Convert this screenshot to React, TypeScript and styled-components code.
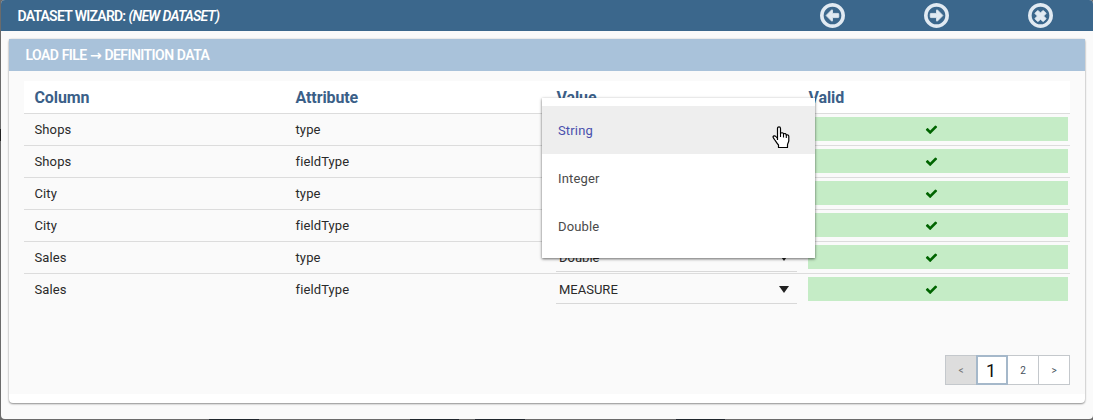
import React from 'react';
import styled, { createGlobalStyle, css } from 'styled-components';

const GlobalStyle = createGlobalStyle`
  *, *::before, *::after { box-sizing: border-box; }
  html, body { margin: 0; height: 100%; overflow: hidden; }
  body {
    background:
      linear-gradient(#222, #222) 0 129px / 1px 12px no-repeat,
      linear-gradient(90deg, transparent 209px, #20262c 209px 259px, transparent 259px 410px,
        #20262c 410px 459px, transparent 459px 475px, #20262c 475px 525px, transparent 525px 676px,
        #20262c 676px 725px, transparent 725px) 0 419px / 100% 1px no-repeat,
      #6b6b6b;
    font-family: Roboto, "Liberation Sans", sans-serif;
    font-size: 13px;
    color: #2a2a2a;
  }
`;

const Dialog = styled.main`
  position: relative;
  display: flex;
  flex-direction: column;
  height: 419px;
  margin-left: 1px;
  background: #fafafa;
  border-radius: 4px;
  overflow: hidden;
`;

const Toolbar = styled.header`
  display: flex;
  align-items: center;
  flex: none;
  height: 31px;
  padding: 0 40px 0 16.5px;
  background: #3b678c;
  color: #fff;
`;

const Title = styled.h1`
  flex: 1;
  margin: 0;
  font-size: 14px;
  font-weight: 600;
  letter-spacing: -0.78px;
  word-spacing: 0.5px;
`;

const Actions = styled.div`
  display: flex;
  gap: 79px;
`;

const IconButton = styled.button`
  display: flex;
  width: 25px;
  height: 25px;
  padding: 0;
  border: 0;
  background: none;
  color: #e1eaf2;
`;

const Card = styled.section`
  display: flex;
  flex-direction: column;
  height: 364px;
  margin: 8px 8px 0 8px;
  background: #fff;
  border-radius: 2px 2px 4px 4px;
  box-shadow: 0 1px 2px rgba(0, 0, 0, 0.4), 0 0 2px rgba(0, 0, 0, 0.15);
`;

const CardTitle = styled.h2`
  flex: none;
  height: 32px;
  margin: 0;
  padding-left: 16.5px;
  background: #a9c2da;
  color: #fff;
  font-size: 14px;
  font-weight: 600;
  line-height: 32px;
  letter-spacing: -0.56px;
  word-spacing: 0.4px;
`;

const Crumb = styled.span`
  font-family: "DejaVu Sans", sans-serif;
`;

const CardBody = styled.div`
  display: flex;
  flex-direction: column;
  height: 323px;
  padding: 10px 15px 0;
  background: #fafafa;
`;

const Row = styled.div<{ $last?: boolean }>`
  display: grid;
  grid-template-columns: 261px 261px 262px 261px;
  align-items: center;
  height: 32px;
  border-bottom: 1px solid ${(p) => (p.$last ? 'transparent' : '#dcdcdc')};
`;

const HeadRow = styled(Row)`
  height: 33px;
  background: #fff;
  color: #3b5f88;
  font-size: 16px;
  font-weight: 700;
  letter-spacing: -0.1px;
`;

const HeadCell = styled.div<{ $flush?: boolean }>`
  padding-left: ${(p) => (p.$flush ? 0.5 : 10.5)}px;
`;

const Cell = styled.div`
  padding-left: 10.5px;
  letter-spacing: 0.12px;
`;

const Select = styled.div`
  display: flex;
  align-items: center;
  justify-content: space-between;
  align-self: end;
  width: 241px;
  height: 28px;
  margin: 0 0 1px 10px;
  padding: 0 8.5px 1px 3px;
  border-bottom: 1px solid #d8d8d8;
`;

const Arrow = styled.span`
  border: 5.5px solid transparent;
  border-top: 7px solid #212121;
  border-bottom: 0;
`;

const ValidCell = styled.div`
  display: flex;
  align-self: start;
  align-items: center;
  justify-content: center;
  width: 260px;
  height: 24px;
  margin-top: 3px;
  padding-right: 13px;
  background: #c5ecc6;
  color: #006400;
`;

const Pager = styled.nav`
  display: flex;
  align-self: flex-end;
  margin-top: auto;
  margin-bottom: 9px;
`;

const Page = styled.button<{ $state?: 'disabled' | 'current' }>`
  width: 32px;
  height: 30px;
  margin-left: -1px;
  padding: 0;
  border: 1px solid #c4c8cc;
  background: #fff;
  color: #444f5c;
  font: 10px Roboto, sans-serif;
  ${(p) => p.$state === 'disabled' && css`background: #ddd; color: #777;`}
  ${(p) => p.$state === 'current' && css`
    z-index: 1;
    padding-right: 2px;
    border: 2px solid #a5b8ca;
    color: #111;
    font-size: 18px;
  `}
`;

const Menu = styled.ul`
  position: absolute;
  top: 98px;
  left: 541px;
  width: 273px;
  margin: 0;
  padding: 8px 0;
  background: #fff;
  list-style: none;
  box-shadow: 0 1px 3px rgba(0, 0, 0, 0.45), 0 1px 2px rgba(0, 0, 0, 0.2);
`;

const Option = styled.li<{ $active?: boolean }>`
  height: 48px;
  padding: 1px 0 0 16px;
  line-height: 48px;
  letter-spacing: 0.15px;
  background: ${(p) => (p.$active ? '#eee' : '#fff')};
  color: ${(p) => (p.$active ? '#4a50ad' : '#4a4a4a')};
`;

const Cursor = styled.svg`
  position: absolute;
  top: 126px;
  left: 771px;
`;

const RING = 'M1440 896q0-148-73-273t-198-198-273-73-273 73-198 198-73 273 73 273 198 198 273 73 273-73 198-198 73-273zm224 0q0 209-103 385.5t-279.5 279.5-385.5 103-385.5-103-279.5-279.5-103-385.5 103-385.5 279.5-279.5 385.5-103 385.5 103 279.5 279.5 103 385.5z';
const LEFT = 'M1280 800v192q0 14-9 23t-23 9h-352v192q0 14-9 23t-23 9q-12 0-24-10l-319-319q-9-9-9-23t9-23l320-320q9-9 23-9t23 9 9 23v192h352q14 0 23 9t9 23z';
const CROSS = 'M1225 1111l-146 146q-10 10-23 10t-23-10l-137-137-137 137q-10 10-23 10t-23-10l-146-146q-10-10-10-23t10-23l137-137-137-137q-10-10-10-23t10-23l146-146q10-10 23-10t23 10l137 137 137-137q10-10 23-10t23 10l146 146q10 10 10 23t-10 23l-137 137 137 137q10 10 10 23t-10 23z';
const CHECK = 'M1671 566q0 40-28 68l-724 724-136 136q-28 28-68 28t-68-28l-136-136-362-362q-28-28-28-68t28-68l136-136q28-28 68-28t68 28l294 295 656-657q28-28 68-28t68 28l136 136q28 28 28 68z';

const RingIcon = ({ d, flip }: { d: string; flip?: boolean }) => (
  <svg width="25" height="25" viewBox="128 128 1536 1536" fill="currentColor">
    <path d={RING} />
    <path
      d={d}
      stroke="currentColor"
      strokeWidth="50"
      transform={flip ? 'translate(1792 0) scale(-1 1)' : undefined}
    />
  </svg>
);

const CheckIcon = () => (
  <svg width="13" height="13" viewBox="0 0 1792 1792" fill="currentColor">
    <path d={CHECK} />
  </svg>
);

const rows = [
  ['Shops', 'type', ''],
  ['Shops', 'fieldType', ''],
  ['City', 'type', ''],
  ['City', 'fieldType', ''],
  ['Sales', 'type', 'Double'],
  ['Sales', 'fieldType', 'MEASURE'],
];

export default function App() {
  return (
    <>
      <GlobalStyle />
      <Dialog>
        <Toolbar>
          <Title>DATASET WIZARD: <em>(NEW DATASET)</em></Title>
          <Actions>
            <IconButton aria-label="Back"><RingIcon d={LEFT} /></IconButton>
            <IconButton aria-label="Next"><RingIcon d={LEFT} flip /></IconButton>
            <IconButton aria-label="Close"><RingIcon d={CROSS} /></IconButton>
          </Actions>
        </Toolbar>
        <Card>
          <CardTitle>LOAD FILE <Crumb>→</Crumb> DEFINITION DATA</CardTitle>
          <CardBody>
            <HeadRow>
              <HeadCell>Column</HeadCell>
              <HeadCell>Attribute</HeadCell>
              <HeadCell>Value</HeadCell>
              <HeadCell $flush>Valid</HeadCell>
            </HeadRow>
            {rows.map(([column, attribute, value], i) => (
              <Row key={i} $last={i === rows.length - 1}>
                <Cell>{column}</Cell>
                <Cell>{attribute}</Cell>
                <Select>{value}<Arrow /></Select>
                <ValidCell><CheckIcon /></ValidCell>
              </Row>
            ))}
            <Pager>
              <Page $state="disabled">&lt;</Page>
              <Page $state="current">1</Page>
              <Page>2</Page>
              <Page>&gt;</Page>
            </Pager>
          </CardBody>
        </Card>
        <Menu>
          <Option $active>String</Option>
          <Option>Integer</Option>
          <Option>Double</Option>
        </Menu>
        <Cursor width="18" height="23" viewBox="0 0 18 23">
          <path
            d="M5.5 14V2.5C5.5.2 8.5.2 8.5 2.5V7.500C9.500 6.200 11.300 6.700 11.500 8C12.700 7 14 7.700 14.300 9C15.500 8.500 16.800 9.200 16.800 10.500V14.500C16.800 16.500 15.500 17.500 15.500 19V21.500H6.500V19C5 17.500 3.500 15 2.500 13.500C1.700 12.300.8 11.500 1 10.700C1.500 9.500 3.500 9.800 4.300 11L5.500 12.500"
            fill="#fff" stroke="#000" strokeWidth="1.200" strokeLinejoin="round"
          />
          <path d="M8.500 7V11M11.500 8V11.500M14.300 9V12" fill="none" stroke="#000" strokeWidth="1.100" />
        </Cursor>
      </Dialog>
    </>
  );
}
